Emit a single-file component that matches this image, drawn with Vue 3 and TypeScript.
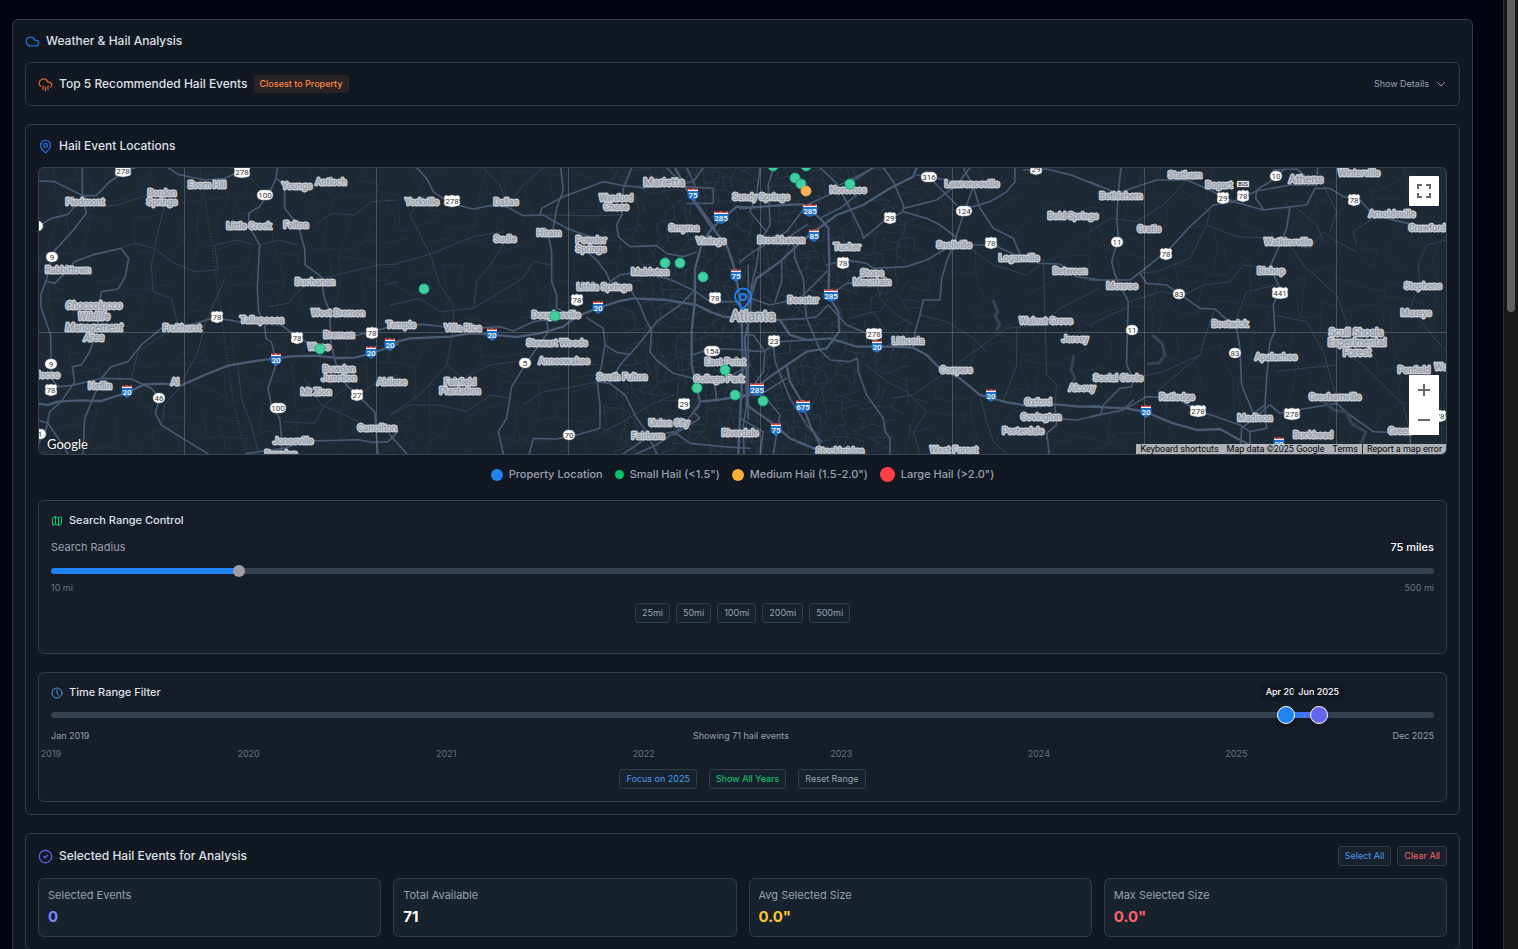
<script setup lang="ts">
import { computed, ref } from 'vue'

type Point = [number, number]
interface Label { t: string; x: number; y: number; s?: number; i?: boolean }
interface Shield { n: string; x: number; y: number }

/* ---------- controls ---------- */
const radius = ref(75)
const radiusSteps = [25, 50, 100, 200, 500]
const radiusFill = computed(() => {
  const p = (radius.value - 10) / 490
  return { '--fill': `calc(${p * 100}% + ${6 - 12 * p}px)` }
})

const months = 84
const monthNames = ['Jan', 'Feb', 'Mar', 'Apr', 'May', 'Jun', 'Jul', 'Aug', 'Sep', 'Oct', 'Nov', 'Dec']
const from = ref(75)
const to = ref(77)
const pct = (m: number) => `${(m / months) * 100}%`
const monthLabel = (m: number) => `${monthNames[m % 12]} ${2019 + Math.floor(m / 12)}`
const years = [2019, 2020, 2021, 2022, 2023, 2024, 2025]
function setRange(a: number, b: number) {
  from.value = a
  to.value = b
}

const legend = [
  { name: 'Property Location', cls: 'dot-blue' },
  { name: 'Small Hail (<1.5")', cls: 'dot-green' },
  { name: 'Medium Hail (1.5-2.0")', cls: 'dot-amber' },
  { name: 'Large Hail (>2.0")', cls: 'dot-red' },
]

const stats = [
  { name: 'Selected Events', value: '0', cls: 'indigo' },
  { name: 'Total Available', value: '71', cls: 'white' },
  { name: 'Avg Selected Size', value: '0.0"', cls: 'amber' },
  { name: 'Max Selected Size', value: '0.0"', cls: 'red' },
]

/* ---------- map data ---------- */
const gridX = [184, 376, 568, 760, 952, 1144, 1336]

const sheets = [
  {
    x: 38,
    wide: [
      '0,716 30,720 60,710 120,706 190,708 240,692 270,682 320,658 370,656 430,661 500,630 570,602 640,590 690,583 760,574 830,572 900,579 950,578 1000,565 1080,537',
    ],
    road: [
      '133,8 133,90 145,145 110,190 70,235 45,262 25,345 8,390 10,430 38,510 40,640 60,665 100,662',
      '0,48 50,50 100,75 135,92 175,92 215,50 245,30 290,8',
      '0,185 40,160 90,148 115,118 133,92',
      '22,348 50,355 80,325 110,290 170,268 248,250 272,280 262,335 240,372 190,380 180,440 178,500 155,560 130,600 103,605 110,650 70,710 35,740 25,790 0,840',
      '390,8 420,28 500,45 560,40 630,10',
      '718,8 714,40 700,72 665,125 632,145 634,185 665,240 658,370 662,440 680,480 684,520 700,530 712,580 712,605 690,670 700,720 725,760 732,830 730,866',
      '714,40 740,60 740,130 780,180 800,250 802,300 850,335 858,395 875,440 880,540 895,600 925,660 1010,740 1020,866',
      '190,640 220,605 270,590 310,540 370,490 450,482 530,458 600,470 730,480 770,510 830,545',
      '880,510 960,510 1040,490 1080,480',
      '100,662 190,640 280,642 340,670 365,700 352,745 370,780 450,830 510,866',
      '190,640 165,700 140,760 135,866',
      '800,828 900,826 960,824 1000,832 1050,830 1080,800',
      '625,866 690,856 740,850 800,828',
      '0,765 30,775 60,820 90,866',
    ],
    thin: [
      '850,340 930,322 1020,300 1080,298', '140,95 190,125 240,120 330,90 400,100', '248,250 290,235 350,250 400,290 470,320 540,315',
      '540,315 530,240 600,225 650,240', '665,240 720,225 780,240', '830,180 880,145 950,150 1000,110 1080,105',
      '380,120 360,200 340,300 345,380 400,400 420,480', '430,655 480,560 500,480 560,340', '690,425 750,415 790,370 850,335',
      '430,661 380,720 370,780', '735,770 830,775 860,720 920,670', '1040,360 1080,350', '600,600 610,700 640,780 660,856',
      '800,640 850,720 920,750 1000,790', '1080,630 1020,650 960,690', '280,640 300,560 390,500',
    ],
  },
  {
    x: 390,
    wide: [
      '0,535 60,520 180,515 240,505 300,508 380,516 450,505 520,485 560,455 620,430 690,408 730,400 830,405 920,420 960,440 1000,455 1080,458',
      '1080,128 1040,125 1000,160 965,190 935,240 915,310 915,400 905,500 905,600 930,710 980,705 1080,690',
      '855,8 900,90 960,180 1010,240 1030,300 1040,340 1055,450 1058,600 1045,866',
    ],
    road: [
      '830,8 880,60 940,140 975,190', '0,480 100,478 160,485 250,490 330,485 370,498 430,470 470,465 560,455',
      '80,8 110,40 130,80 180,115 250,132 300,122 350,125 400,152 460,150 530,190 600,215',
      '450,150 455,130 520,95 640,50 700,62 760,68 850,62 970,70 970,115 890,115',
      '512,8 520,75 500,130 490,190 475,210 485,260 485,350 500,390 500,430 540,450',
      '725,8 700,70 695,150 680,180 685,215 720,245 800,242 830,265 880,275 918,262',
      '590,260 620,285 650,325 660,350 720,370 750,420 770,470 785,495 780,560 800,585 850,625 910,640',
      '590,458 640,490 645,540 635,600 622,650 630,720 630,790 560,810 500,822 430,820 418,866',
      '645,540 680,562 720,568', '622,650 660,655 705,690 740,760 770,800 800,866',
      '470,465 475,500 440,550 405,600 365,665 350,760 325,800 340,866',
      '915,375 870,420 800,470 740,545 690,600 670,640', '660,350 690,330 750,320 830,340 910,375 960,410 1050,410',
      '930,720 870,790 800,840 740,866', '700,866 770,820 850,800 900,835 1000,845 1080,850',
      '910,570 960,550 1080,555', '930,710 910,740 930,760 850,810', '890,8 915,60 900,100', '1075,300 1075,760',
      '0,810 50,866', '980,705 975,660 1080,600', '940,8 910,50 860,60',
    ],
    thin: [
      '0,300 60,285 120,268 250,215 340,200', '110,80 60,150 120,268 150,360 190,420 190,500 170,600 100,680 0,750',
      '345,130 400,60 460,8', '350,225 300,300 260,350 250,430', '455,150 600,152 700,150', '250,430 150,440 90,400 0,420',
      '0,750 60,720 150,720 230,740 300,690 360,700', '560,590 620,600', '400,720 460,680 530,670 620,650',
      '170,600 220,640 300,600 380,590', '350,125 330,60 280,8', '485,300 430,290 400,340 350,370 250,430', '640,800 700,770 780,720 850,690',
    ],
  },
  {
    x: 740,
    wide: [
      '0,455 120,465 150,510 200,525 270,520 350,545 460,545 520,548 560,570 600,610 660,640 720,690 800,712 880,725 950,718 1020,725 1080,724',
      '0,130 130,120 190,118 240,160 265,190 268,290 265,390 295,440 298,500 260,550 200,560 140,600 70,650 20,690 0,700',
      '30,400 50,340 120,290 190,225 290,150 370,120 450,70 520,35 530,8',
      '35,360 30,450 15,520 20,650 20,720 90,770 150,820 250,862', '140,600 150,650 185,710 210,780 240,840',
    ],
    road: [
      '100,8 85,60 90,180 60,230 50,300 35,360', '20,720 10,780 12,866', '20,510 40,510 75,560 70,620 20,690', '100,540 105,590 150,700 200,780 245,830',
      '530,30 620,45 700,65', '240,8 290,55 330,130 365,200 370,220 430,170 490,140 560,160 600,180 640,210 650,220',
      '430,8 460,50 490,120 490,140', '670,8 700,65 720,130 760,190 820,220 840,270 900,295 960,297 1010,335 1080,345',
      '700,65 680,120 660,180 640,240 620,290 605,340 600,405 550,405 540,450 525,500 520,545',
      '660,125 700,125 750,110 800,80 825,50 825,8', '260,300 320,285 380,295 400,310 500,305 560,285 620,250 700,240 760,240 840,275',
      '850,15 920,12 1000,32 1080,65', '490,130 590,105 650,60 690,8', '560,20 590,60 650,120',
      '265,420 320,480 380,505 420,540', '120,465 200,460 230,455 265,420', '195,420 200,460 240,555 270,585 330,590 352,580 355,620 380,690 430,760 435,800 450,820 450,866',
      '945,725 950,780 920,805 928,866', '945,760 1010,765 1080,750', '400,8 300,75 200,120 140,200 40,260 0,290',
      '270,390 320,355 400,350', '160,215 165,280 190,340 195,420', '125,290 125,350 105,410', '60,8 50,90 30,140 80,200',
      '300,60 360,30 400,8', '60,230 140,220 200,180', '30,400 90,420 180,400 260,320', '70,690 120,750 100,866', '0,760 70,800 60,866', '240,160 300,130 350,90',
      '0,690 60,690 140,640', '0,555 70,560 120,530 200,525',
    ],
    thin: [
      '1080,370 960,430 900,480 800,490 700,560 620,620', '910,280 915,460 920,630 950,660 945,720', '650,220 760,300 860,330 900,300',
      '380,600 440,650 500,680 560,740 520,800 540,866', '720,690 740,770 760,830 800,866', '400,310 420,400 470,450 520,480', '450,700 520,690 620,620',
      '540,450 620,470 700,520 740,560', '830,490 830,600 790,710', '330,460 400,440 440,500',
    ],
  },
  {
    x: 1090,
    wide: ['0,725 110,730 170,742 250,775 320,795 390,792 440,820 480,840 640,845 680,866'],
    road: [
      '93,8 85,80 80,160 85,220 65,290 75,330 115,410 112,500 110,600 130,640 125,665 90,670 40,720 32,748',
      '0,50 80,85 200,45 290,45 360,75 430,110 520,135 560,130 650,120 675,70 720,70 760,95 810,105 850,150 930,170 1000,185 1070,190',
      '430,110 500,78 600,60 680,60 683,8', '520,133 497,100 500,75 540,50 590,8', '430,110 370,120 300,185 240,250 160,315 120,345 0,345',
      '150,325 170,355 230,360 280,395 330,430 375,432 440,490 450,550 455,660 490,745', '600,125 590,190 565,250 540,305 570,370 550,420 555,500 540,530 530,640 525,720 490,745',
      '110,730 170,695 260,700 320,735 450,780 480,800', '450,866 455,790 480,770 540,720 570,745 620,735 740,715 780,750 850,800 960,805 962,840 940,866',
      '480,840 480,800 530,790 525,720', '0,755 100,735 130,705', '550,15 620,12 680,60',
    ],
    thin: [
      '360,135 350,180 440,215 560,220 600,240', '600,240 640,300 740,390 770,470 760,560 820,600 880,660 940,720 960,800', '150,325 200,320 300,280 330,220 350,180',
      '280,390 340,360 420,350 460,300 540,310', '1070,225 1010,240 985,300 990,360 960,430', '120,410 210,380 280,390', '375,432 350,500 330,570 270,620 200,680',
      '600,240 660,250 700,200 740,230 800,260', '850,160 790,200 800,240', '560,360 470,380 440,460', '550,450 650,470 700,560 740,700',
      '0,480 60,450 110,430', '700,60 740,140 720,200', '620,130 680,180 700,230', '0,200 60,160 140,170 220,120 290,45', '960,430 1000,480 1070,560',
      '130,640 220,620 330,570', '560,620 640,610 740,600',
    ],
  },
]

const linePath = (pts: string) => 'M' + pts.split(' ').join('L')

/* Local streets: a jittered lattice, denser around the city centre. */
function makeRng(seed: number) {
  let s = seed
  return () => {
    s = (s * 1664525 + 1013904223) % 4294967296
    return s / 4294967296
  }
}
function lattice(x0: number, y0: number, x1: number, y1: number, step: number, keep: number, seed: number) {
  const rnd = makeRng(seed)
  const cols = Math.ceil((x1 - x0) / step) + 1
  const rows = Math.ceil((y1 - y0) / step) + 1
  const cx = (x0 + x1) / 2
  const half = (x1 - x0) / 2
  const pts: Point[][] = []
  for (let r = 0; r < rows; r++) {
    const row: Point[] = []
    for (let c = 0; c < cols; c++) {
      row.push([x0 + c * step + (rnd() - 0.5) * step * 1.1, y0 + r * step + (rnd() - 0.5) * step * 1.1])
    }
    pts.push(row)
  }
  let d = ''
  const seg = (a: Point, b: Point) => {
    const fade = step < 14 ? 1 - Math.pow(Math.abs(a[0] - cx) / half, 3) : 1
    const k = rnd()
    const mx = (a[0] + b[0]) / 2 + (rnd() - 0.5) * step * 0.6
    const my = (a[1] + b[1]) / 2 + (rnd() - 0.5) * step * 0.6
    if (k < keep * fade) d += `M${a[0].toFixed(1)} ${a[1].toFixed(1)}Q${mx.toFixed(1)} ${my.toFixed(1)} ${b[0].toFixed(1)} ${b[1].toFixed(1)}`
  }
  for (let r = 0; r < rows; r++) {
    for (let c = 0; c < cols; c++) {
      if (c + 1 < cols) seg(pts[r][c], pts[r][c + 1])
      if (r + 1 < rows) seg(pts[r][c], pts[r + 1][c])
    }
  }
  return d
}
const ruralStreets = lattice(30, 160, 1460, 470, 21, 0.52, 11)
const cityStreets = lattice(585, 160, 930, 470, 10, 0.6, 5)

const labels: Label[] = [
  { t: 'Piedmont', x: 85, y: 202 }, { t: 'Borden', x: 162, y: 193 }, { t: 'Springs', x: 162, y: 202 }, { t: 'Esom Hill', x: 207, y: 185 },
  { t: 'Youngs', x: 297, y: 186 }, { t: 'Antioch', x: 331, y: 182 }, { t: 'Little Creek', x: 249, y: 226 }, { t: 'Felton', x: 296, y: 225 },
  { t: 'Rabbittown', x: 68, y: 270 }, { t: 'Buchanan', x: 315, y: 282 }, { t: 'West Bremen', x: 338, y: 313 }, { t: 'Tallapoosa', x: 262, y: 320 },
  { t: 'Fruithurst', x: 182, y: 328 }, { t: 'Bremen', x: 339, y: 335 }, { t: 'Waco', x: 319, y: 347 }, { t: 'Temple', x: 401, y: 325 },
  { t: 'Bowdon', x: 339, y: 369 }, { t: 'Junction', x: 339, y: 378 }, { t: 'Mt Zion', x: 316, y: 392 }, { t: 'Abilene', x: 392, y: 382 },
  { t: 'Heflin', x: 100, y: 386 }, { t: 'Al', x: 175, y: 382 }, { t: 'locco', x: 49, y: 375 }, { t: 'Carrollton', x: 377, y: 428 }, { t: 'Jonesville', x: 293, y: 441 },
  { t: 'Bowdon', x: 281, y: 454 }, { t: 'Choccolocco', x: 94, y: 305, s: 10, i: true }, { t: 'Wildlife', x: 94, y: 316, s: 10, i: true },
  { t: 'Management', x: 94, y: 327, s: 10, i: true }, { t: 'Area', x: 94, y: 337, s: 10, i: true },
  { t: 'Yorkville', x: 422, y: 202 }, { t: 'Dallas', x: 506, y: 202 }, { t: 'Sudie', x: 505, y: 239 }, { t: 'Hiram', x: 549, y: 233 },
  { t: 'Powder', x: 591, y: 240 }, { t: 'Springs', x: 591, y: 249 }, { t: 'Wynford', x: 616, y: 198 }, { t: 'Chase', x: 616, y: 207 },
  { t: 'Marietta', x: 664, y: 182, s: 11 }, { t: 'Smyrna', x: 684, y: 228 }, { t: 'Vinings', x: 711, y: 241 }, { t: 'Mableton', x: 650, y: 272 },
  { t: 'Lithia Springs', x: 604, y: 287 }, { t: 'Douglasville', x: 556, y: 315 }, { t: 'Villa Rica', x: 463, y: 328 }, { t: 'Stewart Woods', x: 557, y: 343 },
  { t: 'Anneewakee', x: 564, y: 361 }, { t: 'Fairfield', x: 460, y: 382 }, { t: 'Plantation', x: 460, y: 391 }, { t: 'South Fulton', x: 622, y: 377 },
  { t: 'East Point', x: 725, y: 362 }, { t: 'College Park', x: 719, y: 379 }, { t: 'Union City', x: 669, y: 423 }, { t: 'Fairburn', x: 648, y: 436 },
  { t: 'Riverdale', x: 740, y: 433 }, { t: 'Sandy Springs', x: 761, y: 197 }, { t: 'Norcross', x: 848, y: 190 }, { t: 'Brookhaven', x: 781, y: 240 },
  { t: 'Tucker', x: 847, y: 247 }, { t: 'Stone', x: 872, y: 273 }, { t: 'Mountain', x: 872, y: 282 }, { t: 'Decatur', x: 803, y: 300 },
  { t: 'Atlanta', x: 753, y: 316, s: 14 }, { t: 'Lithonia', x: 908, y: 341 }, { t: 'Conyers', x: 956, y: 370 }, { t: 'Snellville', x: 954, y: 245 },
  { t: 'Loganville', x: 1019, y: 258 }, { t: 'Between', x: 1070, y: 271 }, { t: 'Lawrenceville', x: 972, y: 184 }, { t: 'Bold Springs', x: 1073, y: 216 },
  { t: 'Walnut Grove', x: 1046, y: 321 }, { t: 'Jersey', x: 1075, y: 339 }, { t: 'Alcovy', x: 1082, y: 388 }, { t: 'Oxford', x: 1038, y: 402 },
  { t: 'Covington', x: 1041, y: 417 }, { t: 'Porterdale', x: 1023, y: 431 }, { t: 'Stockbridge', x: 840, y: 451 }, { t: 'West Forest', x: 954, y: 450 },
  { t: 'Bethlehem', x: 1121, y: 196 }, { t: 'Statham', x: 1185, y: 175 }, { t: 'Bogart', x: 1219, y: 185 }, { t: 'Athens', x: 1306, y: 179, s: 11 },
  { t: 'Winterville', x: 1359, y: 173 }, { t: 'Arnoldsville', x: 1392, y: 214 }, { t: 'Crawford', x: 1427, y: 228 }, { t: 'Gratis', x: 1149, y: 229 },
  { t: 'Watkinsville', x: 1288, y: 242 }, { t: 'Bishop', x: 1271, y: 271 }, { t: 'Monroe', x: 1122, y: 286 }, { t: 'Stephens', x: 1423, y: 286 },
  { t: 'Maxeys', x: 1416, y: 313 }, { t: 'Bostwick', x: 1230, y: 324 }, { t: 'Scull Shoals', x: 1356, y: 332, s: 10 }, { t: 'Experimental', x: 1357, y: 342, s: 10 },
  { t: 'Forest', x: 1357, y: 352, s: 10 }, { t: 'Apalachee', x: 1276, y: 357 }, { t: 'Penfield', x: 1414, y: 370 }, { t: 'Wo', x: 1441, y: 367 },
  { t: 'Social Circle', x: 1118, y: 378 }, { t: 'Rutledge', x: 1177, y: 397 }, { t: 'Greshamville', x: 1335, y: 397 }, { t: 'Madison', x: 1255, y: 418 },
  { t: 'Buckhead', x: 1313, y: 435 }, { t: 'Green', x: 1400, y: 431 },
]

const usShields: Shield[] = [
  { n: '278', x: 123, y: 171 }, { n: '278', x: 242, y: 172 }, { n: '78', x: 217, y: 317 }, { n: '78', x: 297, y: 338 }, { n: '78', x: 372, y: 333 },
  { n: '78', x: 51, y: 390 }, { n: '27', x: 357, y: 395 }, { n: '278', x: 452, y: 201 }, { n: '78', x: 577, y: 300 }, { n: '78', x: 715, y: 298 },
  { n: '29', x: 684, y: 404 }, { n: '23', x: 774, y: 341 }, { n: '29', x: 890, y: 218 }, { n: '78', x: 843, y: 263 }, { n: '78', x: 991, y: 243 },
  { n: '278', x: 874, y: 334 }, { n: '29', x: 1036, y: 169 }, { n: '29', x: 1223, y: 198 }, { n: '78', x: 1243, y: 196 }, { n: '78', x: 1354, y: 200 },
  { n: '78', x: 1166, y: 254 }, { n: '441', x: 1280, y: 293 }, { n: '278', x: 1198, y: 411 }, { n: '278', x: 1292, y: 414 }, { n: '78', x: 1440, y: 416 },
]
const stateShields: Shield[] = [
  { n: '100', x: 265, y: 195 }, { n: '9', x: 52, y: 257 }, { n: '9', x: 51, y: 364 }, { n: '46', x: 159, y: 398 }, { n: '100', x: 278, y: 408 },
  { n: '1', x: 40, y: 434 }, { n: '', x: 37, y: 226 }, { n: '5', x: 525, y: 363 }, { n: '70', x: 569, y: 435 }, { n: '154', x: 712, y: 351 },
  { n: '316', x: 929, y: 177 }, { n: '124', x: 964, y: 211 }, { n: '10', x: 1276, y: 176 }, { n: '11', x: 1117, y: 242 }, { n: '83', x: 1179, y: 294 },
  { n: '11', x: 1132, y: 330 }, { n: '83', x: 1235, y: 353 },
]
const interstates: Shield[] = [
  { n: '20', x: 127, y: 391 }, { n: '20', x: 276, y: 359 }, { n: '20', x: 371, y: 352 }, { n: '20', x: 390, y: 344 }, { n: '20', x: 492, y: 334 },
  { n: '20', x: 598, y: 307 }, { n: '75', x: 693, y: 194 }, { n: '285', x: 721, y: 217 }, { n: '75', x: 736, y: 275 }, { n: '285', x: 810, y: 210 },
  { n: '85', x: 814, y: 235 }, { n: '285', x: 831, y: 295 }, { n: '20', x: 877, y: 346 }, { n: '285', x: 757, y: 389 }, { n: '675', x: 803, y: 406 },
  { n: '75', x: 776, y: 429 }, { n: '20', x: 991, y: 395 }, { n: '20', x: 1146, y: 411 }, { n: '20', x: 1279, y: 443 },
]
const half = (n: string, two: number, three: number) => (n.length > 2 ? three : two)
const usPath = (n: string) => {
  const w = half(n, 6, 8)
  return `M${-w} -4L${-w + 2} -6L${-w / 2} -5L0 -6L${w / 2} -5L${w - 2} -6L${w} -4Q${w - 1} -1 ${w} 2Q${w} 5 ${w - 3} 5L0 6L${3 - w} 5Q${-w} 5 ${-w} 2Q${1 - w} -1 ${-w} -4Z`
}
const interPath = (n: string) => {
  const w = half(n, 5, 7)
  return `M${-w} -3H${w}Q${w + 2} 2 ${w - 2} 5L0 7L${2 - w} 5Q${-w - 2} 2 ${-w} -3Z`
}
const interTop = (n: string) => {
  const w = half(n, 5, 7)
  return `M${-w} -6L${-w / 2} -5L0 -6L${w / 2} -5L${w} -6V-4H${-w}Z`
}

const smallHail: Point[] = [
  [424, 289], [320, 349], [555, 316], [665, 263], [680, 263], [703, 277], [725, 370], [697, 388], [735, 395], [763, 401],
  [773, 166], [806, 166], [795, 178], [801, 184], [850, 184],
]
const mediumHail: Point[] = [[806, 191]]
</script>

<template>
  <div class="page">
    <main class="content">
      <section class="panel outer">
        <h2 class="title">
          <svg class="icon blue" viewBox="0 0 24 24"><path d="M17.5 19H9a7 7 0 1 1 6.71-9h1.79a4.5 4.5 0 1 1 0 9Z" /></svg>
          Weather &amp; Hail Analysis
        </h2>

        <section class="panel split">
          <h3 class="title">
            <svg class="icon orange" viewBox="0 0 24 24"><path d="M4 14.899A7 7 0 1 1 15.71 8h1.79a4.5 4.5 0 0 1 2.5 8.242M16 14v6M8 14v6M12 16v6" /></svg>
            Top 5 Recommended Hail Events
            <span class="badge">Closest to Property</span>
          </h3>
          <button type="button" class="details">
            Show Details
            <svg class="icon chevron" viewBox="0 0 24 24"><path d="m5 9 7 7 7-7" /></svg>
          </button>
        </section>

        <section class="panel stack">
          <h3 class="title map-title">
            <svg class="icon blue" viewBox="0 0 24 24"><path d="M20 10c0 4.993-5.539 10.193-7.399 11.799a1 1 0 0 1-1.202 0C9.539 20.193 4 14.993 4 10a8 8 0 0 1 16 0" /><circle cx="12" cy="10" r="3" /></svg>
            Hail Event Locations
          </h3>

          <div class="map">
            <svg class="canvas" viewBox="39 168 1407 286" preserveAspectRatio="xMidYMid slice" role="img" aria-label="Hail event map around Atlanta">
              <path class="street" :d="ruralStreets" />
              <path class="street city" :d="cityStreets" />
              <g v-for="s in sheets" :key="s.x" :transform="`translate(${s.x} 165) scale(0.3333)`">
                <path v-for="p in s.thin" :key="p" class="thin" :d="linePath(p)" />
                <path v-for="p in s.road" :key="p" class="road" :d="linePath(p)" />
                <path v-for="p in s.wide" :key="p" class="wide" :d="linePath(p)" />
              </g>
              <path class="border" d="M200 168L212 245L222 320L233 400L246 454" />
              <path class="lake" d="M993 300l5 12 -3 4 5 9 -4 5M1074 355l-3 15 4 8 -5 10M1152 335l10 8 3 12 -6 8 -12 1M1322 400l12 10 12 2 6 12 14 8 -6 14" />
              <path v-for="x in gridX" :key="x" class="grid" :d="`M${x}.5 168V454`" />
              <path class="grid" d="M39 332.5H1446" />

              <text
                v-for="(l, k) in labels" :key="k" class="place" :class="{ slant: l.i }"
                :x="l.x" :y="l.y + (l.s ?? 9) * 0.36" :font-size="l.s ?? 9"
              >{{ l.t }}</text>

              <g v-for="(s, k) in usShields" :key="'u' + k" :transform="`translate(${s.x} ${s.y})`">
                <path class="plate" :d="usPath(s.n)" /><text class="num" y="3">{{ s.n }}</text>
              </g>
              <g v-for="(s, k) in stateShields" :key="'s' + k" :transform="`translate(${s.x} ${s.y})`">
                <rect class="plate" :x="-half(s.n, 6, 8)" y="-5" :width="half(s.n, 12, 16)" height="10" rx="5" /><text class="num" y="3">{{ s.n }}</text>
              </g>
              <g transform="translate(1243 184)"><rect class="plate" x="-6" y="-3" width="12" height="6" /><text class="num bus" y="2">BUS</text></g>
              <g v-for="(s, k) in interstates" :key="'i' + k" :transform="`translate(${s.x} ${s.y})`">
                <path class="inter" :d="interPath(s.n)" /><path class="inter-top" :d="interTop(s.n)" /><path class="inter-line" :d="`M${-half(s.n, 5, 7)} -3.5H${half(s.n, 5, 7)}`" />
                <text class="inter-num" y="4">{{ s.n }}</text>
              </g>

              <circle v-for="(p, k) in smallHail" :key="'g' + k" class="hail" :cx="p[0]" :cy="p[1]" r="5" />
              <circle v-for="(p, k) in mediumHail" :key="'m' + k" class="hail medium" :cx="p[0]" :cy="p[1]" r="5" />
              <g class="pin"><path d="M743 309C739 304.500 735 301 735 296.500A8 8 0 0 1 751 296.500C751 301 747 304.500 743 309Z" /><circle cx="743" cy="297" r="3" /></g>
            </svg>
            <span class="google">Google</span>
            <button type="button" class="map-btn full" aria-label="Toggle fullscreen view">
              <svg viewBox="0 0 18 18"><path d="M3 7V3h4M11 3h4v4M15 11v4h-4M7 15H3v-4" /></svg>
            </button>
            <div class="zoomer">
              <button type="button" class="map-btn" aria-label="Zoom in"><svg viewBox="0 0 18 18"><path d="M9 3v12M3 9h12" /></svg></button>
              <button type="button" class="map-btn" aria-label="Zoom out"><svg viewBox="0 0 18 18"><path d="M3 9h12" /></svg></button>
            </div>
            <div class="credits">
              <button type="button">Keyboard shortcuts</button>
              <span>Map data ©2025 Google</span>
              <a href="#terms">Terms</a>
              <a href="#report" class="report">Report a map error</a>
            </div>
          </div>

          <ul class="legend">
            <li v-for="l in legend" :key="l.name"><i class="dot" :class="l.cls"></i>{{ l.name }}</li>
          </ul>

          <section class="card search">
            <h4 class="subtitle">
              <svg class="icon small green" viewBox="0 0 24 24"><path d="M14.106 5.553a2 2 0 0 0 1.788 0l3.659-1.83A1 1 0 0 1 21 4.619v12.764a1 1 0 0 1-.553.894l-4.553 2.277a2 2 0 0 1-1.788 0l-4.212-2.106a2 2 0 0 0-1.788 0l-3.659 1.83A1 1 0 0 1 3 19.381V6.618a1 1 0 0 1 .553-.894l4.553-2.277a2 2 0 0 1 1.788 0zM15 5.764v15M9 3.236v15" /></svg>
              Search Range Control
            </h4>
            <div class="row">
              <label for="radius">Search Radius</label>
              <output for="radius">{{ radius }} miles</output>
            </div>
            <input id="radius" v-model.number="radius" class="radius" type="range" min="10" max="500" :style="radiusFill" />
            <div class="row limits"><span>10 mi</span><span>500 mi</span></div>
            <div class="chips">
              <button v-for="r in radiusSteps" :key="r" type="button" class="chip" @click="radius = r">{{ r }}mi</button>
            </div>
          </section>

          <section class="card time">
            <h4 class="subtitle">
              <svg class="icon small sky" viewBox="0 0 24 24"><circle cx="12" cy="12" r="10" /><path d="M12 6v6l3 4" /></svg>
              Time Range Filter
            </h4>
            <div class="range">
              <div class="track"></div>
              <div class="span" :style="{ left: pct(from), width: pct(to - from) }"></div>
              <input v-model.number="from" class="knob start" type="range" min="0" :max="months" aria-label="Range start" />
              <input v-model.number="to" class="knob end" type="range" min="0" :max="months" aria-label="Range end" />
              <span class="tip" :style="{ left: pct(from) }">{{ monthLabel(from) }}</span>
              <span class="tip" :style="{ left: pct(to) }">{{ monthLabel(to) }}</span>
            </div>
            <div class="row ends"><span>Jan 2019</span><span>Showing 71 hail events</span><span>Dec 2025</span></div>
            <div class="years"><span v-for="y in years" :key="y">{{ y }}</span></div>
            <div class="chips roomy">
              <button type="button" class="chip sky" @click="setRange(72, 84)">Focus on 2025</button>
              <button type="button" class="chip green" @click="setRange(0, 84)">Show All Years</button>
              <button type="button" class="chip" @click="setRange(75, 77)">Reset Range</button>
            </div>
          </section>
        </section>

        <section class="panel">
          <div class="head">
            <h3 class="title">
              <svg class="icon indigo" viewBox="0 0 24 24"><circle cx="12" cy="12" r="10" /><path d="m9 12 2 2 4-4" /></svg>
              Selected Hail Events for Analysis
            </h3>
            <div class="chips">
              <button type="button" class="chip sky">Select All</button>
              <button type="button" class="chip red">Clear All</button>
            </div>
          </div>
          <div class="stats">
            <div v-for="s in stats" :key="s.name" class="stat">
              <span class="name">{{ s.name }}</span>
              <strong :class="s.cls">{{ s.value }}</strong>
            </div>
          </div>
        </section>
      </section>
    </main>
    <div class="scrollbar" aria-hidden="true"><div class="thumb"></div></div>
  </div>
</template>

<style>
body { margin: 0; background: #02040f; }
</style>

<style scoped>
* { box-sizing: border-box; }
.page {
  display: flex; height: 100vh; overflow: hidden; background: #02040f;
  font-family: Inter, "Liberation Sans", sans-serif; font-size: 11px; line-height: 15px; color: #99a1af;
}
.content { flex: 1; min-width: 0; padding: 19px 30px 0 12px; }
h2, h3, h4, ul { margin: 0; padding: 0; font-weight: 500; }
button { font-family: inherit; cursor: pointer; }
.panel { border: 1px solid #303d4b; border-radius: 6px; padding: 12px; background: #111822; }
.outer { display: flex; flex-direction: column; gap: 18px; min-height: 100vh; }
.outer > .title { margin-bottom: -6px; }
.title { display: flex; align-items: center; gap: 6px; font-size: 12px; line-height: 18px; color: #dde1e7; }
.icon { width: 15px; height: 15px; flex: none; fill: none; stroke: currentColor; stroke-width: 2; stroke-linecap: round; stroke-linejoin: round; }
.icon.small { width: 12px; height: 12px; }
.blue { color: #1c73e0; }
.orange { color: #e2622b; }
.green { color: #05d373; }
.sky { color: #4a9df0; }
.icon.indigo { color: #5f62e6; }
.split { display: flex; justify-content: space-between; align-items: center; }
.badge { padding: 0 6px; border-radius: 3px; background: #2a2226; color: #ff8b3d; font-size: 9px; line-height: 18px; }
.details { display: flex; align-items: center; gap: 6px; padding: 0; border: 0; background: none; color: #99a1af; font-size: 9px; line-height: 12px; }
.chevron { width: 12px; height: 12px; }
.stack { display: flex; flex-direction: column; gap: 18px; }
.map-title { margin-bottom: -6px; }

.map { position: relative; height: 288px; border: 1px solid #364250; border-radius: 6px; overflow: hidden; background: #1e2936; }
.canvas { display: block; width: 100%; height: 100%; fill: none; font-family: Roboto, sans-serif; }
.street { stroke: #273340; stroke-width: 1; }
.street.city { stroke: #2d3a49; }
.thin { stroke: #364353; stroke-width: 3; stroke-linejoin: round; }
.road { stroke: #475873; stroke-width: 5; stroke-linejoin: round; stroke-linecap: round; }
.wide { stroke: #4a5b76; stroke-width: 7; stroke-linejoin: round; stroke-linecap: round; }
.border { stroke: #475260; stroke-dasharray: 1 2; }
.lake { stroke: #364456; stroke-width: 3; stroke-linejoin: round; }
.grid { stroke: #9aa39c; stroke-opacity: 0.35; }
.place { fill: #8b929f; stroke: #c6cad1; stroke-width: 3; paint-order: stroke; stroke-linejoin: round; text-anchor: middle; font-weight: 400; }
.slant { font-style: italic; }
.plate { fill: #fff; stroke: #8b929d; stroke-width: 0.5; }
.num { fill: #333; font-size: 8px; text-anchor: middle; }
.bus { font-size: 5px; font-weight: 700; }
.inter { fill: #1f72c9; }
.inter-top { fill: #dd5350; }
.inter-line { stroke: #fff; }
.inter-num { fill: #fff; font-size: 8px; font-weight: 500; text-anchor: middle; }
.hail { fill: #45cfa1; stroke: #12b07b; stroke-width: 1; }
.hail.medium { fill: #ffb259; stroke: #f59e3b; }
.pin { stroke: #1d83f2; stroke-width: 2; }
.google { position: absolute; left: 8px; bottom: 2px; color: #fff; font-family: Lato, sans-serif; font-size: 13px; line-height: 16px; text-shadow: 0 0 2px #000; }
.map-btn { display: flex; align-items: center; justify-content: center; width: 30px; height: 30px; padding: 0; border: 0; background: #fff; }
.map-btn svg { width: 18px; height: 18px; fill: none; stroke: #666; stroke-width: 2; }
.full { position: absolute; top: 8px; right: 7px; border-radius: 1px; }
.zoomer { position: absolute; right: 7px; bottom: 19px; }
.credits { position: absolute; right: 0; bottom: 0; display: flex; height: 10px; background: rgba(235, 235, 235, 0.7); font-family: Roboto, sans-serif; font-size: 9px; line-height: 10px; color: #000; white-space: nowrap; }
.credits > * { padding: 0 4px; border: 0; background: none; color: #000; font: inherit; text-decoration: none; }
.credits .report { border-left: 1px solid #1e2936; }

.legend { display: flex; justify-content: center; gap: 12px; margin-top: -6px; list-style: none; }
.legend li { display: flex; align-items: center; gap: 6px; }
.dot { width: 12px; height: 12px; border-radius: 50%; }
.dot-blue { background: #2083f2; }
.dot-green { width: 9px; height: 9px; background: #05c168; }
.dot-amber { background: #f4b136; }
.dot-red { width: 15px; height: 15px; background: #ff4048; }

.card { border: 1px solid #303d4b; border-radius: 6px; padding: 12px; background: #161d29; }
.subtitle { display: flex; align-items: center; gap: 6px; font-size: 11px; line-height: 15px; color: #dde1e7; }
.row { display: flex; justify-content: space-between; }
.search { padding-bottom: 30px; }
.search .subtitle { margin-bottom: 12px; }
.row output { color: #fff; font-weight: 500; }
.radius { appearance: none; display: block; width: 100%; height: 12px; margin: 10px 0 5px; background: none; cursor: pointer; }
.radius::-webkit-slider-runnable-track { height: 6px; border-radius: 3px; background: linear-gradient(to right, #2083f2 var(--fill), #364250 var(--fill)); }
.radius::-webkit-slider-thumb { appearance: none; width: 12px; height: 12px; margin-top: -3px; border-radius: 50%; background: #9c9ea4; }
.limits { font-size: 9px; line-height: 12px; color: #6a7282; margin-bottom: 9px; }
.chips { display: flex; justify-content: center; gap: 6px; }
.roomy { gap: 12px; }
.chip { height: 20px; padding: 0 6px; border: 1px solid #303d4b; border-radius: 3px; background: #18222d; color: #99a1af; font-size: 9px; line-height: 12px; }
.chip.sky { color: #4a9df0; }
.chip.green { color: #05d373; }
.chip.red { color: #ff6369; }

.range { position: relative; height: 18px; margin: 6px 0; }
.track, .span { position: absolute; top: 6px; height: 6px; }
.track { left: 0; right: 0; border-radius: 3px; background: #364250; }
.span { background: linear-gradient(to right, #2083f2, #6366f1); }
.knob { appearance: none; position: absolute; left: -9px; width: calc(100% + 18px); height: 18px; margin: 0; background: none; pointer-events: none; }
.knob::-webkit-slider-thumb { appearance: none; width: 18px; height: 18px; border: 1px solid #fff; border-radius: 50%; pointer-events: auto; box-shadow: 0 3px 6px rgba(0, 0, 0, 0.2); }
.start::-webkit-slider-thumb { background: #2083f2; }
.end::-webkit-slider-thumb { background: #6366f1; }
.tip { position: absolute; bottom: 23px; padding: 0 5px; transform: translateX(-50%); border-radius: 3px; background: #111822; color: #fff; font-size: 9px; font-weight: 500; line-height: 18px; white-space: nowrap; }
.ends { font-size: 9px; line-height: 12px; }
.years { display: grid; grid-template-columns: repeat(7, 1fr); margin: 6px 0 9px; font-size: 9px; line-height: 12px; color: #6a7282; }
.years span { justify-self: start; transform: translateX(-50%); }

.head { display: flex; justify-content: space-between; align-items: center; margin-bottom: 12px; }
.stats { display: grid; grid-template-columns: repeat(4, 1fr); gap: 12px; }
.stat { display: flex; flex-direction: column; gap: 3px; padding: 9px; border: 1px solid #303d4b; border-radius: 6px; background: #18222d; }
.stat strong { font-size: 15px; line-height: 21px; font-weight: 700; }
strong.indigo { color: #7c86ff; }
strong.white { color: #fff; }
strong.amber { color: #fcc537; }
strong.red { color: #ff6369; }

.scrollbar { width: 15px; flex: none; padding: 0 3px; border-left: 1px solid #303030; background: #191919; }
.thumb { width: 8px; height: 312px; border-radius: 0 0 4px 4px; background: #5f5f5f; }
</style>
